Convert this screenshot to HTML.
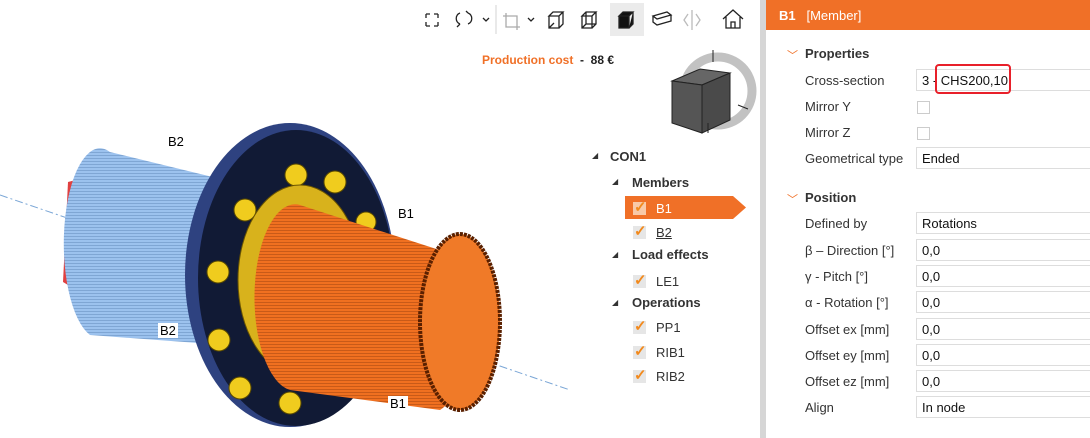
<!DOCTYPE html>
<html><head><meta charset="utf-8"><style>
body{margin:0;width:1090px;height:438px;overflow:hidden;background:#fff;font-family:"Liberation Sans",sans-serif;position:relative}
.abs{position:absolute}
.lbl{position:absolute;left:805px;font-size:13px;color:#333}
.inp{position:absolute;left:916px;width:180px;height:22px;border:1px solid #ddd;box-sizing:border-box;font-size:13px;padding:3px 0 0 5px;color:#111}
.cb{position:absolute;left:917px;width:11px;height:11px;border:1px solid #ccc}
.sec{position:absolute;left:805px;font-size:13px;font-weight:bold;color:#333}
.chev{position:absolute;left:787px;color:#f07027;font-size:11px}
.tree{position:absolute;font-size:13px;color:#333}
.ck{position:absolute;width:13px;height:13px;background:#e6e6e6}
.ck:after{content:"✓";position:absolute;left:1px;top:-4px;color:#f28a1e;font-weight:bold;font-size:15px}
</style></head><body>
<div class="abs" style="left:760px;top:0;width:6px;height:438px;background:#d6d6d6"></div>
<div class="abs" style="left:766px;top:0;width:324px;height:30px;background:#f07027"></div>
<div class="abs" style="left:779px;top:8px;color:#fff;font-size:13px"><b>B1</b>&nbsp;&nbsp; [Member]</div>
<div class="chev" style="top:47px">﹀</div><div class="sec" style="top:46px">Properties</div>
<div class="lbl" style="top:73px">Cross-section</div><div class="inp" style="top:69px">3 - CHS200,10</div>
<div class="abs" style="left:935px;top:64px;width:76px;height:30px;border:2px solid #e8202a;border-radius:4px;box-sizing:border-box"></div>
<div class="lbl" style="top:99px">Mirror Y</div><div class="cb" style="top:101px"></div>
<div class="lbl" style="top:125px">Mirror Z</div><div class="cb" style="top:127px"></div>
<div class="lbl" style="top:151px">Geometrical type</div><div class="inp" style="top:147px">Ended</div>
<div class="chev" style="top:191px">﹀</div><div class="sec" style="top:190px">Position</div>
<div class="lbl" style="top:216px">Defined by</div><div class="inp" style="top:212px">Rotations</div>
<div class="lbl" style="top:243px">β – Direction [°]</div><div class="inp" style="top:239px">0,0</div>
<div class="lbl" style="top:269px">γ - Pitch [°]</div><div class="inp" style="top:265px">0,0</div>
<div class="lbl" style="top:295px">α - Rotation [°]</div><div class="inp" style="top:291px">0,0</div>
<div class="lbl" style="top:322px">Offset ex [mm]</div><div class="inp" style="top:318px">0,0</div>
<div class="lbl" style="top:348px">Offset ey [mm]</div><div class="inp" style="top:344px">0,0</div>
<div class="lbl" style="top:374px">Offset ez [mm]</div><div class="inp" style="top:370px">0,0</div>
<div class="lbl" style="top:400px">Align</div><div class="inp" style="top:396px">In node</div>

<div class="abs" style="left:610px;top:3px;width:34px;height:33px;background:#ebebeb"></div>
<svg class="abs" style="left:420px;top:0" width="340" height="40" fill="none" stroke="#222" stroke-width="1.3">
<path d="M6 14l4 0M6 14l0 4M18 14l-4 0M18 14l0 4M6 26l4 0M6 26l0-4M18 26l-4 0M18 26l0-4"/>
<path d="M40 13c-5 2-5 9 0 11M40 24l-3 3M48 13c5 2 5 9 0 11M46 11l2 2"/><path d="M63 18l3 3 3-3"/>
<line x1="76" y1="5" x2="76" y2="34" stroke="#ddd"/>
<path d="M86 13v14h14M83 16h14v14" stroke="#aaa"/><path d="M108 18l3 3 3-3" />
<path d="M129 16h10l4-4h-10zM129 16v12h10V16M139 28l4-4V12M129 28l5-5"/>
<path d="M162 16h10l4-4h-10zM162 16v12h10V16M172 28l4-4V12M166 12v12h10M166 24l-4 4"/>
<path d="M199 16h10l4-4h-10zM199 16v12h10V16M209 28l4-4V12" fill="#111"/>
<path d="M233 16l14-4 4 3-14 4zM233 16v6l4 3 14-4v-6" />
<path d="M272 10v20M268 14l-4 6 4 6M276 14l4 6-4 6" stroke="#bbb"/>
<path d="M303 19l10-9 10 9M306 17v11h14V17M311 28v-6h4v6"/>
</svg>
<div class="abs" style="left:482px;top:53px;font-size:12px;font-weight:bold;color:#f07027">Production cost <span style="color:#222">&nbsp;-&nbsp; 88 €</span></div>
<svg class="abs" style="left:660px;top:45px" width="100" height="90">
<circle cx="58" cy="46" r="34" fill="none" stroke="#c2c2c2" stroke-width="9"/>
<path d="M12 36l28-12 30 4-28 12z" fill="#666" stroke="#222"/>
<path d="M12 36v42l30 10V40z" fill="#555" stroke="#222"/>
<path d="M42 40v48l28-13V28z" fill="#4a4a4a" stroke="#222"/>
<path d="M53 5v12M78 60l10 4M48 78v10" stroke="#222"/>
</svg>
<div class="tree" style="left:592px;top:151px;font-size:8px">◢</div><div class="tree" style="left:610px;top:149px;font-weight:bold">CON1</div>
<div class="tree" style="left:612px;top:177px;font-size:8px">◢</div><div class="tree" style="left:632px;top:175px;font-weight:bold">Members</div>
<svg class="abs" style="left:625px;top:196px" width="122" height="23"><path d="M0 0h108l13 11.5-13 11.5H0z" fill="#f07027"/></svg>
<div class="ck" style="left:633px;top:202px;background:#f8c9a8"></div><div class="tree" style="left:656px;top:201px;color:#fff">B1</div>
<div class="ck" style="left:633px;top:226px"></div><div class="tree" style="left:656px;top:225px;text-decoration:underline">B2</div>
<div class="tree" style="left:612px;top:250px;font-size:8px">◢</div><div class="tree" style="left:632px;top:247px;font-weight:bold">Load effects</div>
<div class="ck" style="left:633px;top:275px"></div><div class="tree" style="left:656px;top:274px">LE1</div>
<div class="tree" style="left:612px;top:298px;font-size:8px">◢</div><div class="tree" style="left:632px;top:295px;font-weight:bold">Operations</div>
<div class="ck" style="left:633px;top:321px"></div><div class="tree" style="left:656px;top:320px">PP1</div>
<div class="ck" style="left:633px;top:346px"></div><div class="tree" style="left:656px;top:345px">RIB1</div>
<div class="ck" style="left:633px;top:370px"></div><div class="tree" style="left:656px;top:369px">RIB2</div>
<svg class="abs" style="left:0;top:0" width="580" height="438">
<defs>
<pattern id="sb" width="4" height="3" patternUnits="userSpaceOnUse"><rect width="4" height="3" fill="#9cc2ee"/><rect y="2" width="4" height="1" fill="#7fa6d4"/></pattern>
<pattern id="so" width="4" height="3" patternUnits="userSpaceOnUse"><rect width="4" height="3" fill="#f07020"/><rect y="2" width="4" height="1" fill="#c85a18"/></pattern>
</defs>
<line x1="0" y1="195" x2="570" y2="390" stroke="#7aa6d6" stroke-dasharray="8 3 2 3"/>
<path d="M68 182l-5 100 10 6 10-110z" fill="#e04040"/>
<path d="M110 152 L225 180 L225 345 L90 335 A35 92 0 0 1 110 152z" fill="url(#sb)"/>
<ellipse cx="290" cy="275" rx="105" ry="152" fill="#2e4280"/>
<ellipse cx="296" cy="278" rx="98" ry="148" fill="#111a35"/>
<g fill="#f0cc1e" stroke="#5a4a00">
<circle cx="296" cy="175" r="11"/><circle cx="335" cy="182" r="11"/><circle cx="245" cy="210" r="11"/><circle cx="366" cy="222" r="10"/>
<circle cx="218" cy="272" r="11"/><circle cx="219" cy="340" r="11"/><circle cx="240" cy="388" r="11"/><circle cx="290" cy="403" r="11"/>
</g>
<ellipse cx="300" cy="280" rx="62" ry="95" fill="#d8b21c" stroke="#6b5500"/>
<path d="M300 205 L455 255 A45 90 0 0 1 440 410 L290 390 A40 92 0 0 1 300 205z" fill="url(#so)"/>
<ellipse cx="460" cy="322" rx="40" ry="88" fill="#f07a28" stroke="#5a2000" stroke-width="4" stroke-dasharray="3 1"/>
</svg>
<div class="abs" style="left:168px;top:134px;font-size:13px">B2</div>
<div class="abs" style="left:398px;top:206px;font-size:13px">B1</div>
<div class="abs" style="left:158px;top:323px;font-size:13px;background:#fff;padding:0 2px">B2</div>
<div class="abs" style="left:388px;top:396px;font-size:13px;background:#fff;padding:0 2px">B1</div>
</body></html>
